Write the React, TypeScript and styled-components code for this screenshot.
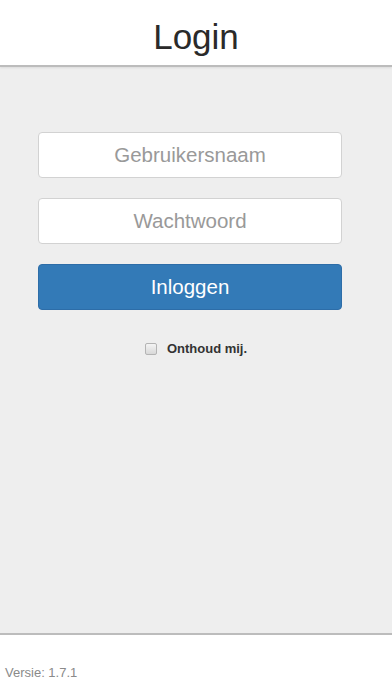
import { createGlobalStyle } from 'styled-components'
import styled from 'styled-components'

const GlobalStyle = createGlobalStyle`
  html, body {
    margin: 0;
    padding: 0;
    height: 100%;
  }
  body {
    font-family: "Liberation Sans", Arial, sans-serif;
    background: #fff;
  }
  #root {
    height: 100%;
  }
`

const Page = styled.div`
  display: flex;
  flex-direction: column;
  height: 100vh;
`

const Header = styled.header`
  height: 65px;
  display: flex;
  align-items: center;
  justify-content: center;
  background: #fff;
  border-bottom: 2px solid #bcbcbc;
  box-shadow: 0 1px 2px rgba(0, 0, 0, 0.08);
  position: relative;
  z-index: 1;
`

const Title = styled.h1`
  margin: 0;
  padding-top: 8px;
  font-size: 35px;
  font-weight: 400;
  color: #2a2a2a;
`

const Main = styled.main`
  flex: 1;
  background: #eeeeee;
  padding: 65px 50px 0 38px;
  display: flex;
  flex-direction: column;
  gap: 20px;
`

const Field = styled.input`
  box-sizing: border-box;
  height: 46px;
  width: 100%;
  border: 1px solid #d2d2d2;
  border-radius: 4px;
  background: #fff;
  font-family: inherit;
  font-size: 20.5px;
  text-align: center;
  color: #555;
  outline: none;

  &::placeholder {
    color: #999;
  }
`

const Submit = styled.button`
  height: 46px;
  width: 100%;
  border: 1px solid #2d6da8;
  border-radius: 4px;
  background: #337ab7;
  color: #fff;
  font-family: inherit;
  font-size: 20.5px;
  cursor: pointer;
`

const RememberRow = styled.label`
  margin-top: 11px;
  padding-left: 12px;
  display: flex;
  align-items: center;
  justify-content: center;
  gap: 10px;
  font-size: 13px;
  font-weight: 700;
  color: #333;
`

const Check = styled.input`
  appearance: none;
  margin: 0;
  width: 12px;
  height: 12px;
  border: 1px solid #b4b4b4;
  border-radius: 2px;
  background: linear-gradient(#f4f4f4, #d8d8d8);
`

const Footer = styled.footer`
  height: 63px;
  border-top: 2px solid #bcbcbc;
  background: #fff;
  display: flex;
  align-items: center;
  padding: 14px 0 0 5px;
  box-sizing: border-box;
  font-size: 13px;
  color: #8a8a8a;
`

export default function App() {
  return (
    <Page>
      <GlobalStyle />
      <Header>
        <Title>Login</Title>
      </Header>
      <Main>
        <Field type="text" placeholder="Gebruikersnaam" />
        <Field type="password" placeholder="Wachtwoord" />
        <Submit>Inloggen</Submit>
        <RememberRow>
          <Check type="checkbox" />
          Onthoud mij.
        </RememberRow>
      </Main>
      <Footer>Versie: 1.7.1</Footer>
    </Page>
  )
}
